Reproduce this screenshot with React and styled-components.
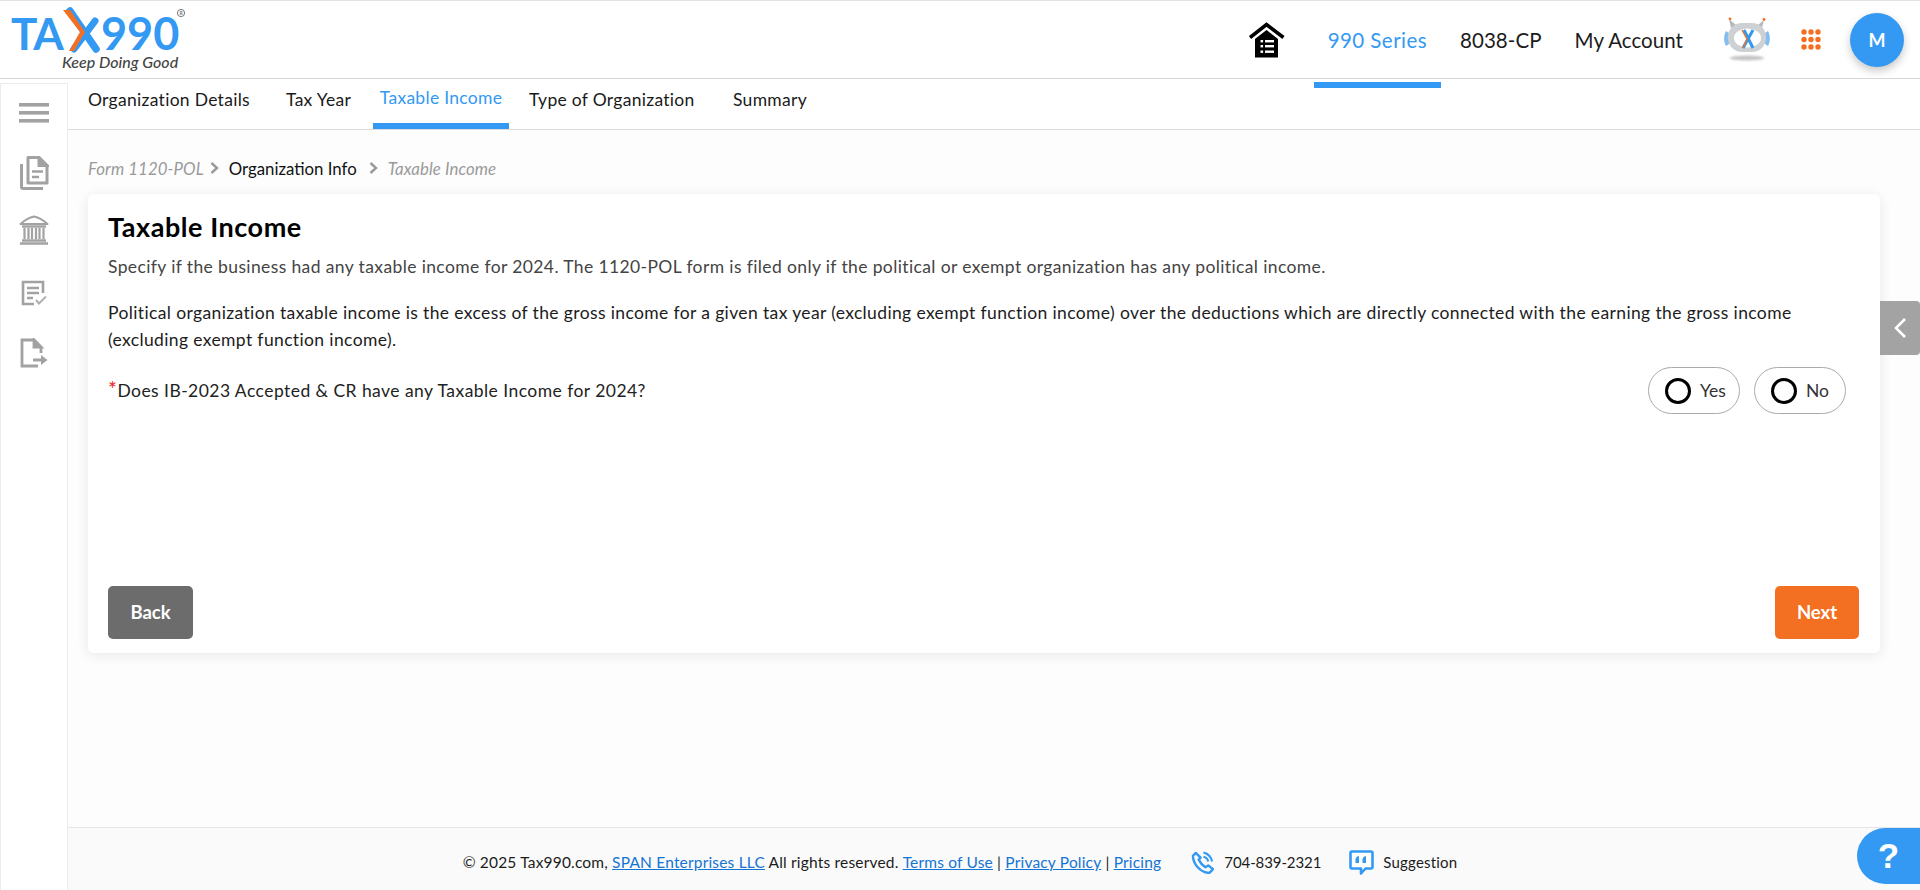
import React from "react";
import styled, { createGlobalStyle } from "styled-components";

const BLUE = "#3399f3";
const ORANGE = "#f36f21";
const FONT = `"Lato", "Liberation Sans", sans-serif`;

const Global = createGlobalStyle`
  html, body { margin: 0; padding: 0; background: #fff; }
  body { font-family: ${FONT}; color: #111; }
  * { box-sizing: border-box; }
`;

const Page = styled.div`
  height: 890px;
  display: flex;
  flex-direction: column;
  overflow: hidden;
  background: #fff;
  border-top: 1px solid #e2e2e2;
`;

const Header = styled.header`
  position: relative;
  z-index: 2;
  height: 78px;
  flex: none;
  display: flex;
  align-items: center;
  justify-content: space-between;
  border-bottom: 1px solid #d6d6d6;
  padding: 0 16px 0 10px;
`;

const Logo = styled.svg`
  display: block;
  width: 180px;
  height: 75px;
`;

const HeaderRight = styled.div`
  display: flex;
  align-items: center;
  height: 100%;
`;

const HomeLink = styled.a`
  display: flex;
  margin-right: 29px;
`;

const NavLink = styled.a`
  position: relative;
  font-size: 20.5px;
  letter-spacing: ${(p) => (p.$active ? "0.45px" : "0.05px")};
  color: ${(p) => (p.$active ? BLUE : "#1c1c1c")};
  padding: 0 ${(p) => (p.$active ? "14px" : "0")};
  margin-right: ${(p) => p.$mr}px;
  white-space: nowrap;
  &::after {
    content: ${(p) => (p.$active ? '""' : "none")};
    position: absolute;
    left: 0;
    right: 0;
    top: 54px;
    height: 6px;
    background: ${BLUE};
  }
`;

const RobotIcon = styled.svg`
  display: block;
  margin-right: 30px;
`;

const AppsIcon = styled.svg`
  display: block;
  margin-right: 29px;
`;

const Avatar = styled.div`
  width: 54px;
  height: 54px;
  border-radius: 50%;
  background: ${BLUE};
  color: #fff;
  font-weight: 700;
  font-size: 18px;
  display: flex;
  align-items: center;
  justify-content: center;
  box-shadow: 0 4px 8px rgba(0, 0, 0, 0.22);
`;

const Body = styled.div`
  flex: 1;
  display: flex;
  min-height: 0;
`;

const Sidebar = styled.aside`
  width: 68px;
  flex: none;
  margin-top: 4px;
  border: 1px solid #ececec;
  border-bottom: none;
  display: flex;
  flex-direction: column;
  align-items: center;
  padding-top: 19px;
`;

const SideSlot = styled.div`
  display: flex;
  justify-content: center;
  margin-bottom: ${(p) => p.$mb}px;
`;

const Main = styled.main`
  flex: 1;
  min-width: 0;
  display: flex;
  flex-direction: column;
  position: relative;
  background: #fdfdfd;
`;

const Tabs = styled.nav`
  height: 51px;
  flex: none;
  display: flex;
  background: #fff;
  border-bottom: 1px solid #dcdcdc;
  padding-left: 20px;
`;

const Tab = styled.a`
  position: relative;
  display: flex;
  align-items: center;
  height: 50px;
  font-size: 17.5px;
  letter-spacing: 0.29px;
  color: ${(p) => (p.$active ? BLUE : "#1a1a1a")};
  padding-bottom: ${(p) => (p.$active ? "14px" : "9px")};
  width: ${(p) => p.$w}px;
  margin-right: ${(p) => p.$mr || 0}px;
  justify-content: ${(p) => (p.$active ? "center" : "flex-start")};
  white-space: nowrap;
  &::after {
    content: ${(p) => (p.$active ? '""' : "none")};
    position: absolute;
    left: 0;
    right: 0;
    bottom: 0;
    height: 6px;
    background: ${BLUE};
  }
`;

const Crumbs = styled.div`
  height: 64px;
  flex: none;
  display: flex;
  align-items: center;
  padding-left: 20px;
  padding-top: 12px;
  font-size: 16.8px;
`;

const CrumbMuted = styled.span`
  color: #9a9a9a;
  font-style: italic;
  letter-spacing: 0.1px;
`;

const CrumbCurrent = styled.span`
  color: #111;
`;

const CrumbChevron = styled.svg`
  margin: 0 ${(p) => p.$r}px 0 ${(p) => p.$l}px;
  flex: none;
`;

const Card = styled.section`
  margin: 0 40px 0 20px;
  height: 459px;
  flex: none;
  background: #fff;
  border-radius: 6px;
  box-shadow: 0 2px 14px rgba(0, 0, 0, 0.09);
  padding: 17px 21px 14px 20px;
  display: flex;
  flex-direction: column;
`;

const Title = styled.h1`
  margin: 0 0 10px;
  font-size: 27px;
  letter-spacing: 0.55px;
  line-height: 32px;
  font-weight: 700;
  color: #000;
`;

const Lead = styled.p`
  margin: 0 0 19px;
  font-size: 17.5px;
  letter-spacing: 0.38px;
  line-height: 27px;
  color: #444;
`;

const Para = styled.p`
  margin: 0 0 14px;
  font-size: 17.5px;
  letter-spacing: 0.37px;
  line-height: 27px;
  color: #1c1c1c;
`;

const QuestionRow = styled.div`
  display: flex;
  align-items: center;
  justify-content: space-between;
  padding-right: 13px;
`;

const Question = styled.span`
  font-size: 17.5px;
  letter-spacing: 0.45px;
  color: #222;
`;

const Required = styled.span`
  color: #f01c1c;
  font-size: 21px;
  line-height: 0;
`;

const Options = styled.div`
  display: flex;
  gap: 14px;
`;

const OptionPill = styled.label`
  width: 92px;
  height: 47px;
  border: 1px solid #aaa;
  border-radius: 24px;
  display: flex;
  align-items: center;
  padding-left: 16px;
  gap: 9px;
  font-size: 17.5px;
  color: #333;
  background: #fff;
`;

const Radio = styled.input`
  appearance: none;
  margin: 0;
  width: 26px;
  height: 26px;
  border: 3px solid #000;
  border-radius: 50%;
  background: #fff;
`;

const Actions = styled.div`
  margin-top: auto;
  display: flex;
  justify-content: space-between;
`;

const ActionButton = styled.button`
  width: ${(p) => p.$w}px;
  height: 53px;
  border: none;
  border-radius: 5px;
  background: ${(p) => p.$bg};
  color: #fff;
  font-family: ${FONT};
  font-size: 18.5px;
  font-weight: 700;
  padding: 0 0 2px;
`;

const SideTab = styled.button`
  position: absolute;
  right: 0;
  top: 222px;
  width: 40px;
  height: 54px;
  border: none;
  padding: 0;
  background: #a3a3a3;
  border-radius: 0 4px 4px 0;
  display: flex;
  align-items: center;
  justify-content: center;
`;

const Footer = styled.footer`
  margin-top: auto;
  height: 63px;
  flex: none;
  display: flex;
  align-items: center;
  justify-content: center;
  background: #fafafa;
  border-top: 1px solid #e6e6e6;
  font-size: 15.5px;
  letter-spacing: 0.18px;
  color: #1c1c1c;
  padding: 6px 68px 0 0;
`;

const FooterText = styled.span`
  white-space: pre;
`;

const FooterLink = styled.a`
  color: #1474d4;
  text-decoration: underline;
`;

const Contact = styled.span`
  display: inline-flex;
  align-items: center;
  font-size: 15px;
  letter-spacing: ${(p) => p.$ls}px;
  gap: ${(p) => p.$gap}px;
  margin-left: ${(p) => p.$ml}px;
`;

const Help = styled.button`
  position: absolute;
  right: 0;
  bottom: 6px;
  width: 63px;
  height: 56px;
  border: none;
  border-radius: 28px 0 0 28px;
  background: ${BLUE};
  color: #fff;
  font-family: "Liberation Sans", sans-serif;
  font-size: 35px;
  font-weight: 700;
  padding: 0;
`;

const IconGray = "#a2a2a2";

const TaxLogo = () => (
  <Logo viewBox="0 0 180 75">
    <text x="1" y="48" fontFamily="Lato, sans-serif" fontWeight="700" fontSize="44" letterSpacing="-1" fill={BLUE}>TA</text>
    <path d="M85 19 L64 47" stroke={BLUE} strokeWidth="7" strokeLinecap="round" fill="none" />
    <path d="M60 9 L86 47" stroke={BLUE} strokeWidth="7.5" strokeLinecap="round" fill="none" />
    <path d="M53 8 H60 L75 30 L64 49 H59 L70 30 Z" fill={ORANGE} />
    <text x="91" y="48" fontFamily="Lato, sans-serif" fontWeight="700" fontSize="45" fill={BLUE}>990</text>
    <circle cx="171" cy="11" r="3.6" fill="none" stroke="#777" strokeWidth="1" />
    <text x="169.4" y="13" fontFamily="Lato, sans-serif" fontWeight="700" fontSize="5" fill="#777">R</text>
    <text x="52" y="66" fontFamily="Lato, sans-serif" fontStyle="italic" fontWeight="500" fontSize="16" fill="#444">Keep Doing Good</text>
  </Logo>
);

const HomeIcon = () => (
  <svg width="36" height="36" viewBox="0 0 36 36">
    <path d="M1 15.5 L17.5 2.5 L34.5 15.5" fill="none" stroke="#000" strokeWidth="3.6" />
    <path d="M6 17 L17.5 8 L29 17 V35.5 H6 Z" fill="#000" />
    <g fill="#fff">
      <rect x="11.5" y="18" width="2.6" height="2.4" /><rect x="16" y="18" width="9" height="2.4" />
      <rect x="11.5" y="23" width="2.6" height="2.4" /><rect x="16" y="23" width="9" height="2.4" />
      <rect x="11.5" y="28.5" width="2.6" height="2.4" /><rect x="16" y="28.5" width="9" height="2.4" />
    </g>
  </svg>
);

const Robot = () => (
  <RobotIcon width="48" height="46" viewBox="0 0 48 46">
    <defs>
      <filter id="robot-soft" x="-20%" y="-20%" width="140%" height="140%">
        <feGaussianBlur stdDeviation="0.7" />
      </filter>
      <filter id="robot-shadow" x="-20%" y="-80%" width="140%" height="260%">
        <feGaussianBlur stdDeviation="1.2" />
      </filter>
    </defs>
    <ellipse cx="24" cy="41" rx="17" ry="2.6" fill="#c4c4c4" filter="url(#robot-shadow)" />
    <g filter="url(#robot-soft)">
      <path d="M6 2 L13 8 L8 11 Z M41 3 L35 8 L39 11 Z" fill="#b4b8bb" />
      <circle cx="7" cy="1.8" r="1.4" fill={ORANGE} />
      <circle cx="41" cy="2.5" r="1.4" fill={ORANGE} />
      <path d="M3 14 C0.5 18 0.5 25 3 29 L6 27 V16 Z M45 14 C47.5 18 47.5 25 45 29 L42 27 V16 Z" fill="#86bdf0" />
      <rect x="5" y="6" width="38" height="29" rx="14" fill="#ced1d3" />
      <ellipse cx="24.5" cy="21" rx="13.5" ry="9.5" fill="#fff" />
      <path d="M30 13 L20 31 M21 13 L30 31" stroke={BLUE} strokeWidth="3" fill="none" />
      <path d="M19 13 L24 22 L20 31" stroke={ORANGE} strokeWidth="1.4" fill="none" />
    </g>
  </RobotIcon>
);

const Apps = () => (
  <AppsIcon width="20" height="21" viewBox="0 0 20 21" fill={ORANGE}>
    {[3, 10.5, 18].map((y) => [3, 10, 17].map((x) => <circle key={`${x}-${y}`} cx={x} cy={y} r="2.7" />))}
  </AppsIcon>
);

const Hamburger = () => (
  <svg width="30" height="20" viewBox="0 0 30 20" fill={IconGray}>
    <rect y="0" width="30" height="3.6" /><rect y="8" width="30" height="3.6" /><rect y="16" width="30" height="3.6" />
  </svg>
);

const DocsIcon = () => (
  <svg width="30" height="34" viewBox="0 0 30 34" fill="none" stroke={IconGray} strokeWidth="3">
    <path d="M9 1.5 H20 L28 9.5 V27 H9 Z" strokeLinejoin="round" />
    <path d="M20 1.5 V9.5 H28 Z" fill={IconGray} />
    <path d="M2.5 8 V31 Q2.5 32.5 4 32.5 H24" />
    <path d="M13 15.5 H24 M13 21 H20" strokeWidth="2.4" />
  </svg>
);

const BankIcon = () => (
  <svg width="30" height="30" viewBox="0 0 30 30" fill="none" stroke={IconGray} strokeWidth="2">
    <path d="M1.5 9 Q8 3 15 1.5 Q22 3 28.5 9 Z" fill="#fff" strokeLinejoin="round" />
    <path d="M3 11.5 H27" strokeWidth="2.4" />
    <path d="M5.5 13 V24 M9.5 13 V24 M13 13 V24 M17 13 V24 M20.5 13 V24 M24.5 13 V24" strokeWidth="2.2" />
    <path d="M3 25.5 H27 M1 28.5 H29" strokeWidth="2.4" />
  </svg>
);

const ChecklistIcon = () => (
  <svg width="26" height="26" viewBox="0 0 26 26" fill="none" stroke={IconGray} strokeWidth="2.6">
    <path d="M22 13 V2 H2 V24 H13" />
    <path d="M6 8 H18 M6 13 H18 M6 18 H12" />
    <path d="M15 20 L18 23.5 L25 16.5" stroke="#b0b0b0" strokeWidth="2" />
  </svg>
);

const ExportIcon = () => (
  <svg width="28" height="30" viewBox="0 0 28 30" fill="none" stroke={IconGray} strokeWidth="2.8">
    <path d="M18 28 H2 V2 H14 L21 9 V15" />
    <path d="M14 2 V9 H21 Z" fill={IconGray} />
    <path d="M13 22 H22" strokeWidth="3" />
    <path d="M21 17 L27.5 22 L21 27 Z" fill={IconGray} stroke="none" />
  </svg>
);

const SmallChevron = ({ l, r }) => (
  <CrumbChevron $l={l} $r={r} width="9" height="12" viewBox="0 0 9 12" fill="none" stroke="#999" strokeWidth="2.4">
    <path d="M1.5 1 L7 6 L1.5 11" />
  </CrumbChevron>
);

const PhoneIcon = () => (
  <svg width="23" height="23" viewBox="0 0 24 24" fill="none" stroke={BLUE} strokeWidth="2.5">
    <path d="M5 2 L2 5 C2 13 9 22 19 23 L23 19 L18 15 L15 17 C12 15 9.5 12 8 9 L10 7 Z" strokeLinejoin="round" />
    <path d="M13 1.5 C17 2.5 21 6 22 11 M13 6 C15.5 6.5 17.5 8.5 18 11" strokeWidth="2.2" />
  </svg>
);

const SuggestIcon = () => (
  <svg width="25" height="25" viewBox="0 0 25 25">
    <path d="M3 1.5 H22 Q23.5 1.5 23.5 3 V17 Q23.5 18.5 22 18.5 H16.5 L12 23.5 V18.5 H3 Q1.5 18.5 1.5 17 V3 Q1.5 1.5 3 1.5 Z" fill="#fff" stroke={BLUE} strokeWidth="2.6" strokeLinejoin="round" />
    <path d="M6.5 13 V9.5 Q6.5 6.5 10 6 V13 Z M13.5 13 V9.5 Q13.5 6.5 17 6 V13 Z" fill={BLUE} />
  </svg>
);

export default function App() {
  return (
    <Page>
      <Global />
      <Header>
        <TaxLogo />
        <HeaderRight>
          <HomeLink><HomeIcon /></HomeLink>
          <NavLink $active $mr={19}>990 Series</NavLink>
          <NavLink $mr={33}>8038-CP</NavLink>
          <NavLink $mr={40}>My Account</NavLink>
          <Robot />
          <Apps />
          <Avatar>M</Avatar>
        </HeaderRight>
      </Header>
      <Body>
        <Sidebar>
          <SideSlot $mb={33}><Hamburger /></SideSlot>
          <SideSlot $mb={25}><DocsIcon /></SideSlot>
          <SideSlot $mb={35}><BankIcon /></SideSlot>
          <SideSlot $mb={32}><ChecklistIcon /></SideSlot>
          <SideSlot $mb={0}><ExportIcon /></SideSlot>
        </Sidebar>
        <Main>
          <Tabs>
            <Tab $w={198}>Organization Details</Tab>
            <Tab $w={87}>Tax Year</Tab>
            <Tab $active $w={136} $mr={20}>Taxable Income</Tab>
            <Tab $w={204}>Type of Organization</Tab>
            <Tab $w={90}>Summary</Tab>
          </Tabs>
          <Crumbs>
            <CrumbMuted>Form 1120-POL</CrumbMuted>
            <SmallChevron l={6} r={10} />
            <CrumbCurrent>Organization Info</CrumbCurrent>
            <SmallChevron l={12} r={10} />
            <CrumbMuted>Taxable Income</CrumbMuted>
          </Crumbs>
          <Card>
            <Title>Taxable Income</Title>
            <Lead>Specify if the business had any taxable income for 2024. The 1120-POL form is filed only if the political or exempt organization has any political income.</Lead>
            <Para>Political organization taxable income is the excess of the gross income for a given tax year (excluding exempt function income) over the deductions which are directly connected with the earning the gross income (excluding exempt function income).</Para>
            <QuestionRow>
              <Question><Required>*</Required>Does IB-2023 Accepted &amp; CR have any Taxable Income for 2024?</Question>
              <Options>
                <OptionPill><Radio type="radio" name="taxable" />Yes</OptionPill>
                <OptionPill><Radio type="radio" name="taxable" />No</OptionPill>
              </Options>
            </QuestionRow>
            <Actions>
              <ActionButton $w={85} $bg="#6c6c6c">Back</ActionButton>
              <ActionButton $w={84} $bg={ORANGE}>Next</ActionButton>
            </Actions>
          </Card>
          <SideTab>
            <svg width="14" height="22" viewBox="0 0 14 22" fill="none" stroke="#fff" strokeWidth="2.6"><path d="M12 2 L3 11 L12 20" /></svg>
          </SideTab>
          <Footer>
            <FooterText>© 2025 Tax990.com, </FooterText>
            <FooterLink>SPAN Enterprises LLC</FooterLink>
            <FooterText> All rights reserved. </FooterText>
            <FooterLink>Terms of Use</FooterLink>
            <FooterText> | </FooterText>
            <FooterLink>Privacy Policy</FooterLink>
            <FooterText> | </FooterText>
            <FooterLink>Pricing</FooterLink>
            <Contact $ml={30} $gap={10} $ls={-0.1}><PhoneIcon />704-839-2321</Contact>
            <Contact $ml={28} $gap={9} $ls={0.2}><SuggestIcon />Suggestion</Contact>
          </Footer>
          <Help>?</Help>
        </Main>
      </Body>
    </Page>
  );
}
